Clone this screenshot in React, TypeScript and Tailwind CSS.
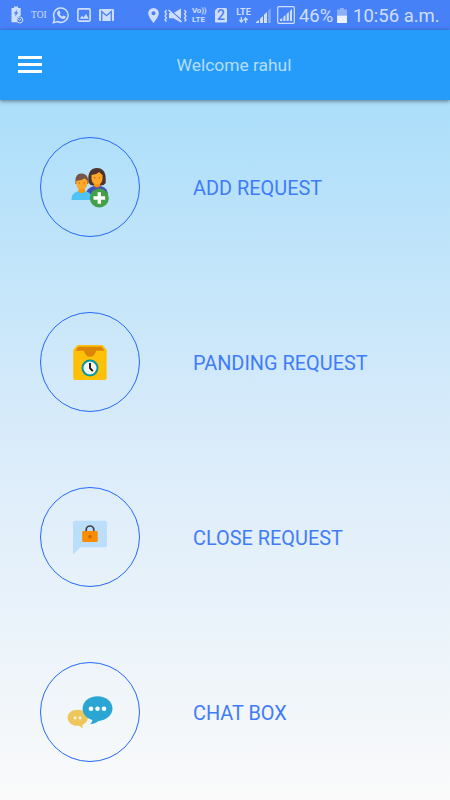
import React from 'react';

interface MenuItemProps {
  label: string;
  children: React.ReactNode;
}

const MenuItem: React.FC<MenuItemProps> = ({ label, children }) => {
  return (
    <li className="flex h-[175px] items-center pl-10">
      <button className="mb-[1px] flex h-[100px] w-[100px] shrink-0 items-center justify-center rounded-full border border-[#2468fa]">
        {children}
      </button>
      <span className="ml-[53px] pt-[3px] text-[19.9px] leading-6 whitespace-nowrap text-[#3f7cfb]">{label}</span>
    </li>
  );
};

const AddUserIcon = () => (
  <svg width="60" height="60" viewBox="0 2 60 60" className="shrink-0">
    {/* woman */}
    <path d="M26 38q2-7 11-7.500q10 .5 11 8v2H26z" fill="#3f51b5" />
    <path d="M28.300 25C28 17 31 13 37 13s8.700 4 8.700 11v4q-1.500 2.500-5 2.500h-8q-3-.5-4.200-3z" fill="#4e342e" />
    <path d="M34 26h6v5q-3 3-6 0z" fill="#fb8c00" />
    <path d="M31.500 20q5-.5 8-3q1 2 3 3v4q-.5 5.500-5.500 5.500T31.500 24z" fill="#ffa726" />
    <circle cx="34.800" cy="22.800" r=".7" fill="#b5701e" />
    <circle cx="39.400" cy="22.800" r=".7" fill="#b5701e" />
    {/* man */}
    <path d="M11.500 45v-2q1-7 10.500-7.500q9 .5 10.500 7.500v2z" fill="#4fc3f7" />
    <path d="M18.500 33h6.500v3.500q-3.200 3-6.500 0z" fill="#ff9800" />
    <path d="M15.400 26Q15.500 18.500 21 18.500q6.500-.5 7.200 6.500v4H15.400z" fill="#795548" />
    <path d="M16.200 26q5 0 8.500-2.800l2.800 2.500v3q-.7 5.800-5.700 5.800t-5.600-5.800z" fill="#ffa726" />
    <circle cx="19.400" cy="28" r=".7" fill="#b5701e" />
    <circle cx="24.200" cy="28" r=".7" fill="#b5701e" />
    <circle cx="39.300" cy="43" r="9.500" fill="#43a047" />
    <path d="M39.300 37.200v11.600M33.500 43h11.600" stroke="#fff" strokeWidth="3.400" />
  </svg>
);

const PendingIcon = () => (
  <svg width="60" height="60" viewBox="0 -3 60 60" className="shrink-0">
    <path d="M17.500 10h25l4.200 5v27.500q0 2.500-2.500 2.500H15.500q-2.300 0-2.300-2.500V15z" fill="#ffc107" />
    <path d="M18.500 11.700h23.200l3 4.100H36q-1.300 6-6 6t-6-6h-8.700z" fill="#db8509" />
    <circle cx="30" cy="33" r="7.500" fill="#f5f5f5" stroke="#0097a7" strokeWidth="2" />
    <path d="M30 28v5.200l2.800 3" fill="none" stroke="#111" strokeWidth="1.800" />
  </svg>
);

const LockedChatIcon = () => (
  <svg width="60" height="60" viewBox="0 0 60 60" className="shrink-0">
    <path d="M15.500 13.700h29q2.500 0 2.500 2.500v21.500q0 2.500-2.500 2.500H20.500L13 47.500V16.200q0-2.500 2.500-2.500z" fill="#bbdefb" />
    <path d="M26.200 25v-2.200a3.800 3.800 0 0 1 7.600 0V25" fill="none" stroke="#424242" strokeWidth="1.700" />
    <rect x="22.200" y="24" width="15.500" height="11" rx="1.300" fill="#fb8c00" />
    <circle cx="30" cy="29.600" r="1.900" fill="#c76e09" />
  </svg>
);

const ChatIcon = () => (
  <svg width="60" height="60" viewBox="0 -3 60 60" className="shrink-0">
    <path d="M17.500 24.700c5.800 0 10.300 3.500 10.300 8 0 3.200-2.200 5.800-5.500 7.200l.8 3.500-4.200-2.700c-6.500.5-11.300-3.300-11.300-8 0-4.500 4.100-8 9.900-8z" fill="#edc75b" />
    <path d="M37.500 11.300c8.300 0 15 5.400 15 12.200s-6.500 11.900-14 12.400c-1.500 1.200-4.200 2.800-8.500 3.300 1.200-1 2.100-2.200 2.500-4.200-6-1.600-9.900-5.900-9.900-11.500 0-6.800 6.600-12.200 14.900-12.200z" fill="#2ba5d3" />
    <g fill="#fff">
      <circle cx="31" cy="23.800" r="2.300" />
      <circle cx="37.500" cy="23.800" r="2.300" />
      <circle cx="44" cy="23.800" r="2.300" />
    </g>
    <g fill="#fdf6e0">
      <circle cx="15.100" cy="33" r="1.400" />
      <circle cx="20" cy="33" r="1.400" />
    </g>
  </svg>
);

const StatusBar = () => {
  return (
    <div className="flex h-[30px] shrink-0 items-center bg-[#4781f8] text-[#d0defd]">
      {/* power saving */}
      <svg width="13" height="18" viewBox="11 6 13 18" fill="currentColor" className="ml-[11px] shrink-0">
        <path d="M11.500 8h2.500V6.400h4V8h2.700v7.500l-3.500 2v4.700h-5.700z" />
        <path d="M17.200 9.500l-3.500 4.300h2l-.8 3 3.600-4.500h-2z" fill="#4781f8" />
        <circle cx="19.800" cy="20" r="3" fill="#4781f8" stroke="currentColor" strokeWidth="1" />
        <path d="M18.200 19l1.500 1.500 1.700-2" fill="none" stroke="currentColor" />
      </svg>
      <span className="ml-[7px] w-[16px] pt-[2px] font-['Liberation_Serif',serif] text-[9.500px] leading-none">TOI</span>
      {/* whatsapp */}
      <svg width="18" height="18" viewBox="52 6 18 18" className="ml-[5px] shrink-0">
        <path d="M53.400 22.600l1.100-4A7.200 7.200 0 1 1 57.400 21.500z" fill="none" stroke="currentColor" strokeWidth="1.500" />
        <path d="M58.400 10.800l1.200-.1.900 2.200-.9 1.200q1 1.900 2.800 2.700l1-1.200 2.200 1v1q-.8 1.600-2.600 1.300-4.500-.8-6-5.300-.1-1.700 1.400-2.800z" fill="currentColor" />
      </svg>
      <svg width="14" height="14" viewBox="0 0 14 14" className="ml-[7px] shrink-0">
        <rect x=".9" y=".9" width="12.200" height="12.200" rx="1" fill="none" stroke="currentColor" strokeWidth="1.600" />
        <path d="M2.700 10.700l2.300-3 1.600 1.700L9 6l2.700 4.700z" fill="currentColor" />
      </svg>
      {/* gmail */}
      <svg width="15" height="12" viewBox="0 0 15 12" className="ml-[8px] shrink-0">
        <rect width="15" height="12" rx="1.200" fill="currentColor" />
        <path d="M2.700 12V2.500l4.800 4.200 4.800-4.200V12" fill="none" stroke="#4781f8" strokeWidth="1.300" />
      </svg>
      {/* location */}
      <svg width="11" height="15" viewBox="0 0 11 15" className="ml-[34px] shrink-0">
        <path fillRule="evenodd" d="M5.500 0A5.300 5.300 0 0 0 .2 5.300C.2 9 5.500 15 5.500 15s5.300-6 5.300-9.700A5.300 5.300 0 0 0 5.500 0zm0 3.300a2 2 0 1 1 0 4 2 2 0 0 1 0-4z" fill="currentColor" />
      </svg>
      {/* vibrate, muted */}
      <svg width="23" height="15" viewBox="0 0 23 15" className="ml-[5px] shrink-0">
        <path d="M2.600 2L1 4l1.500 2L1 8l1.500 2L1 12l1.500 1.500M20.400 2L22 4l-1.500 2L22 8l-1.500 2 1.500 2-1.500 1.500" fill="none" stroke="currentColor" strokeWidth="1.300" />
        <path d="M5 5h4.500l7.500-4.500v14L9.500 10.300H5z" fill="currentColor" />
        <path d="M6 2l12 10.500" stroke="#4781f8" strokeWidth="1.300" />
        <path d="M4.500 2L17.500 14" stroke="currentColor" strokeWidth="1.500" />
      </svg>
      <div className="ml-[5px] w-[15px] text-[8px] leading-[9px] font-bold whitespace-nowrap">
        <div className="tracking-[-0.2px]">Vo))</div>
        <div>LTE</div>
      </div>
      {/* second sim */}
      <div className="ml-[8px] flex h-[15px] w-[12px] items-center justify-center rounded-[1.500px] bg-[#d0defd] pt-[1px] text-[14px] font-medium text-[#4781f8] [clip-path:polygon(25%_0,100%_0,100%_100%,0_100%,0_20%)]">
        2
      </div>
      <div className="ml-[8px] flex w-[17px] flex-col items-center text-[9px] leading-[9px] font-bold">
        <span>LTE</span>
        <svg width="9" height="6" viewBox="0 0 9 6" fill="none" stroke="currentColor" strokeWidth="1.300">
          <path d="M2.300 0v5M.4 3l1.900 2 1.900-2M6.700 6V1M4.800 3l1.900-2 1.900 2" />
        </svg>
      </div>
      <svg width="15" height="15" viewBox="0 0 15 15" fill="currentColor" className="ml-[4px] shrink-0">
        <path d="M0 14l3-2v3H0zM4 10.800L7 8v7H4zM8 6.800L11 4v11H8z" />
        <path d="M12 3l2.800-3v15H12z" opacity=".4" />
      </svg>
      <svg width="18" height="18" viewBox="0 0 18 18" fill="currentColor" className="ml-[6px] shrink-0">
        <rect x=".7" y=".7" width="16.600" height="16.600" rx="1" fill="none" stroke="currentColor" strokeWidth="1.200" />
        <path d="M3 13.500l2.200-1.500v3H3zM6.300 11l2.200-2v6H6.300zM9.600 8l2.200-2v9H9.600zM12.900 5L15 3v12h-2.100z" />
      </svg>
      <span className="ml-[4px] w-[34px] pt-[2px] text-[18.400px] leading-none">46%</span>
      <svg width="10" height="15" viewBox="0 0 10 15" fill="currentColor" className="ml-[4px] shrink-0">
        <path d="M3 0h4v1.500h3v6H0v-6h3z" opacity=".5" />
        <path d="M0 7.500h10V15H0z" fill="#ebf1fe" />
      </svg>
      <span className="ml-[6px] pt-[2px] text-[18.500px] leading-none whitespace-nowrap">10:56 a.m.</span>
    </div>
  );
};

const App: React.FC = () => {
  return (
    <div className="flex h-[800px] w-[450px] flex-col overflow-hidden bg-[#fafafa] font-[Roboto,sans-serif]">
      <StatusBar />

      <header className="z-10 grid h-[70px] shrink-0 grid-cols-[60px_1fr_60px] items-center bg-[#259cf9] shadow-[0_1px_4px_rgba(0,0,0,0.5)]">
        <button className="flex flex-col gap-[4px] pb-[1px] pl-[18px]">
          <span className="h-[3px] w-6 bg-white" />
          <span className="h-[3px] w-6 bg-white" />
          <span className="h-[3px] w-6 bg-white" />
        </button>
        <h1 className="pl-[18px] text-center text-[17.400px] leading-6 text-[#b5defd]">Welcome rahul</h1>
      </header>

      <ul className="flex-1 bg-linear-to-b from-[#abdefa] via-[#dbecfa] to-[#fafafa]">
        <MenuItem label="ADD REQUEST">
          <AddUserIcon />
        </MenuItem>
        <MenuItem label="PANDING REQUEST">
          <PendingIcon />
        </MenuItem>
        <MenuItem label="CLOSE REQUEST">
          <LockedChatIcon />
        </MenuItem>
        <MenuItem label="CHAT BOX">
          <ChatIcon />
        </MenuItem>
      </ul>
    </div>
  );
};

export default App;
